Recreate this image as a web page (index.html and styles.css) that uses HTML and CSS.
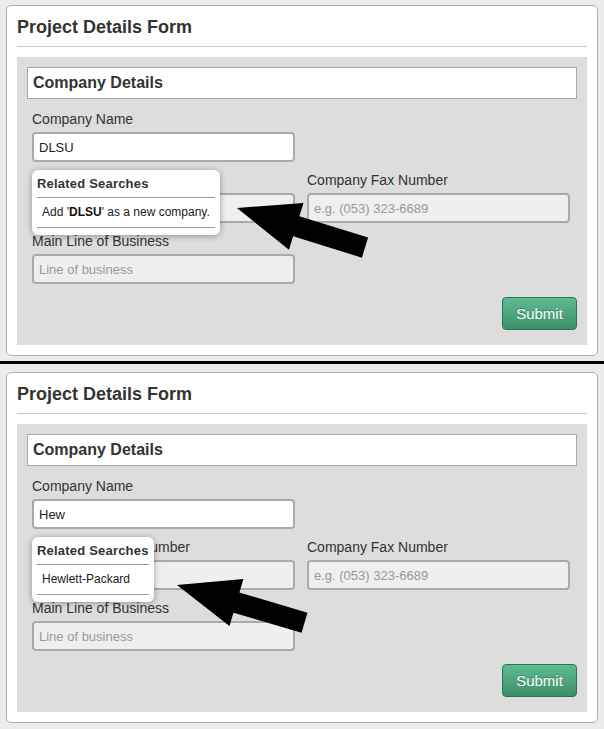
FILE: index.html
```html
<!DOCTYPE html>
<html>
<head>
<meta charset="utf-8">
<title>Project Details Form</title>
<link rel="stylesheet" href="styles.css">
</head>
<body>
<div class="shot">
  <div class="panel">
    <h1 class="title">Project Details Form</h1>
    <hr class="rule">
    <div class="well">
      <div class="legend">Company Details</div>
      <div class="fields">
        <div class="field f-name">
          <label class="label">Company Name</label>
          <input class="input" type="text" value="DLSU">
          <div class="popup">
            <div class="popup-title">Related Searches</div>
            <div class="popup-item">Add '<b>DLSU</b>' as a new company.</div>
          </div>
        </div>
        <div class="field f-phone">
          <label class="label">Company Phone Number</label>
          <input class="input input-muted" type="text">
        </div>
        <div class="field f-fax">
          <label class="label">Company Fax Number</label>
          <input class="input input-muted" type="text" placeholder="e.g. (053) 323-6689">
        </div>
        <div class="field f-line">
          <label class="label">Main Line of Business</label>
          <input class="input input-muted" type="text" placeholder="Line of business">
        </div>
      </div>
      <div class="actions"><button class="btn">Submit</button></div>
    </div>
  </div>
  <svg class="arrow" width="604" height="360" viewBox="0 0 604 360">
    <polygon transform="translate(237 208) rotate(17.2)" points="0,0 62,-24.5 62,-10.5 134,-10.5 134,10.5 62,10.5 62,24.5" fill="#000"/>
  </svg>
</div>
<div class="divider"></div>
<div class="shot shot-second">
  <div class="panel">
    <h1 class="title">Project Details Form</h1>
    <hr class="rule">
    <div class="well">
      <div class="legend">Company Details</div>
      <div class="fields">
        <div class="field f-name">
          <label class="label">Company Name</label>
          <input class="input" type="text" value="Hew">
          <div class="popup">
            <div class="popup-title">Related Searches</div>
            <div class="popup-item">Hewlett-Packard</div>
          </div>
        </div>
        <div class="field f-phone">
          <label class="label">Company Phone Number</label>
          <input class="input input-muted" type="text">
        </div>
        <div class="field f-fax">
          <label class="label">Company Fax Number</label>
          <input class="input input-muted" type="text" placeholder="e.g. (053) 323-6689">
        </div>
        <div class="field f-line">
          <label class="label">Main Line of Business</label>
          <input class="input input-muted" type="text" placeholder="Line of business">
        </div>
      </div>
      <div class="actions"><button class="btn">Submit</button></div>
    </div>
  </div>
  <svg class="arrow" width="604" height="365" viewBox="0 0 604 365">
    <polygon transform="translate(177 221) rotate(16.5)" points="0,0 62,-24.5 62,-10.5 133,-10.5 133,10.5 62,10.5 62,24.5" fill="#000"/>
  </svg>
</div>
</body>
</html>
```
FILE: styles.css
```css
html, body {
  margin: 0;
  padding: 0;
}
body {
  background: #ececec;
  font-family: "Liberation Sans", Arial, sans-serif;
  color: #333;
  width: 604px;
  height: 729px;
  overflow: hidden;
}
.shot {
  position: relative;
  padding: 5px 6px 5px 6px;
}
.shot-second {
  padding-top: 8px;
}
.divider {
  height: 3px;
  background: #000;
}
.panel {
  width: 570px;
  background: #fff;
  border: 1px solid #b0b0b0;
  border-radius: 5px;
  padding: 11px 10px 10px 10px;
}
.title {
  margin: 0;
  font-size: 18px;
  line-height: 20px;
  font-weight: bold;
  color: #333;
}
.rule {
  margin: 9px 0 10px 0;
  border: 0;
  height: 1px;
  background: #c8c8c8;
}
.well {
  background: #dddddd;
  padding: 10px 10px 15px 10px;
}
.legend {
  background: #fff;
  border: 1px solid #a8a8a8;
  height: 30px;
  line-height: 30px;
  padding-left: 5px;
  font-size: 16px;
  font-weight: bold;
  color: #333;
}
.fields {
  margin: 10px 0 0 5px;
  display: grid;
  grid-template-columns: 263px 263px;
  column-gap: 12px;
  row-gap: 8px;
}
.f-name { grid-column: 1; grid-row: 1; position: relative; }
.f-phone { grid-column: 1; grid-row: 2; }
.f-fax { grid-column: 2; grid-row: 2; }
.f-line { grid-column: 1; grid-row: 3; }
.field {
  display: flex;
  flex-direction: column;
}
.label {
  font-size: 14px;
  line-height: 20px;
  color: #333;
  margin-bottom: 3px;
}
.input {
  box-sizing: border-box;
  width: 263px;
  height: 30px;
  margin: 0;
  border: 2px solid #aaaaaa;
  border-radius: 4px;
  background: #fff;
  padding: 0 5px;
  font-family: "Liberation Sans", Arial, sans-serif;
  font-size: 13px;
  color: #222;
  outline: none;
}
.input-muted {
  background: #efefef;
}
.input::placeholder {
  color: #999;
  opacity: 1;
}
.popup {
  position: absolute;
  left: 0;
  top: calc(100% + 8px);
  background: #fff;
  border-radius: 6px;
  box-shadow: 0 1px 6px rgba(0, 0, 0, 0.35);
  padding: 4px 5px 7px 5px;
  white-space: nowrap;
  z-index: 2;
}
.popup-title {
  font-size: 13px;
  font-weight: bold;
  line-height: 20px;
  letter-spacing: 0.2px;
  color: #333;
  padding-bottom: 3px;
  border-bottom: 1px solid #999;
}
.popup-item {
  font-size: 12px;
  line-height: 18px;
  color: #222;
  padding: 5px 5px 6px 5px;
  border-bottom: 1px solid #999;
}
.popup-item b {
  color: #111;
}
.actions {
  display: flex;
  justify-content: flex-end;
  margin-top: 13px;
}
.btn {
  box-sizing: border-box;
  height: 33px;
  width: 75px;
  padding: 0;
  border: 1px solid #2d7453;
  border-radius: 4px;
  background: linear-gradient(to bottom, #5fbb92 0%, #3c8f69 100%);
  color: #fff;
  font-family: "Liberation Sans", Arial, sans-serif;
  font-size: 15px;
  text-shadow: 0 -1px 0 rgba(0, 0, 0, 0.25);
}
.arrow {
  position: absolute;
  left: 0;
  top: 0;
  overflow: visible;
  pointer-events: none;
  z-index: 3;
}
```
